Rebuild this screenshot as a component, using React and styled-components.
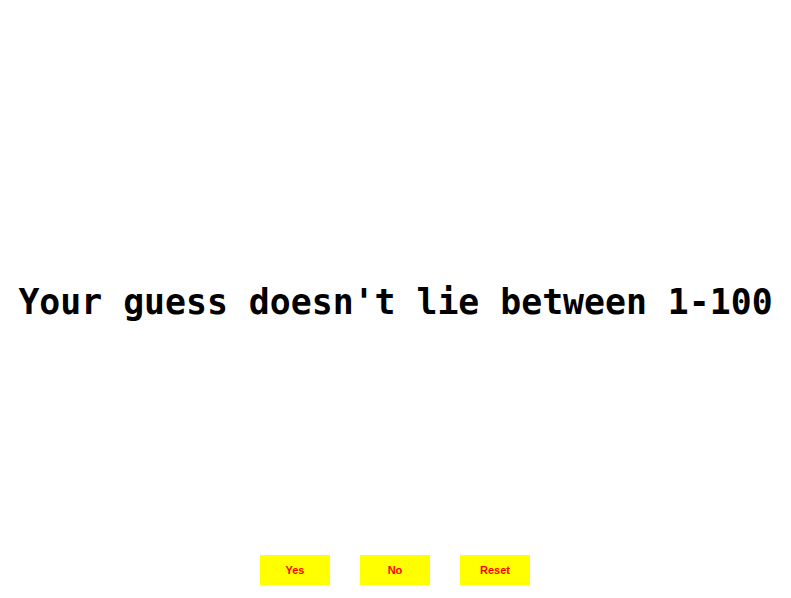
import React from 'react'
import styled, { createGlobalStyle } from 'styled-components'

const GlobalStyle = createGlobalStyle`
  html, body {
    margin: 0;
    padding: 0;
    background: #fff;
  }
`

const Screen = styled.div`
  display: flex;
  flex-direction: column;
  height: 100vh;
`

const MessageArea = styled.div`
  flex: 1;
  display: flex;
  align-items: center;
  justify-content: center;
  padding-top: 49px;
`

const Message = styled.h1`
  margin: 0;
  font-family: "DejaVu Sans Mono", monospace;
  font-weight: bold;
  font-size: 34.8px;
  color: #000;
  white-space: nowrap;
`

const Controls = styled.div`
  display: flex;
  justify-content: center;
  gap: 30px;
  padding-right: 1px;
  margin-bottom: 13px;
`

const Button = styled.button`
  width: 70px;
  height: 30px;
  border: none;
  padding: 0;
  background: #ffff00;
  color: #ff0000;
  font-family: "Liberation Sans", Arial, sans-serif;
  font-weight: bold;
  font-size: 11px;
  cursor: pointer;
`

export default function App () {
  return (
    <Screen>
      <GlobalStyle />
      <MessageArea>
        <Message>Your guess doesn't lie between 1-100</Message>
      </MessageArea>
      <Controls>
        <Button>Yes</Button>
        <Button>No</Button>
        <Button>Reset</Button>
      </Controls>
    </Screen>
  )
}
